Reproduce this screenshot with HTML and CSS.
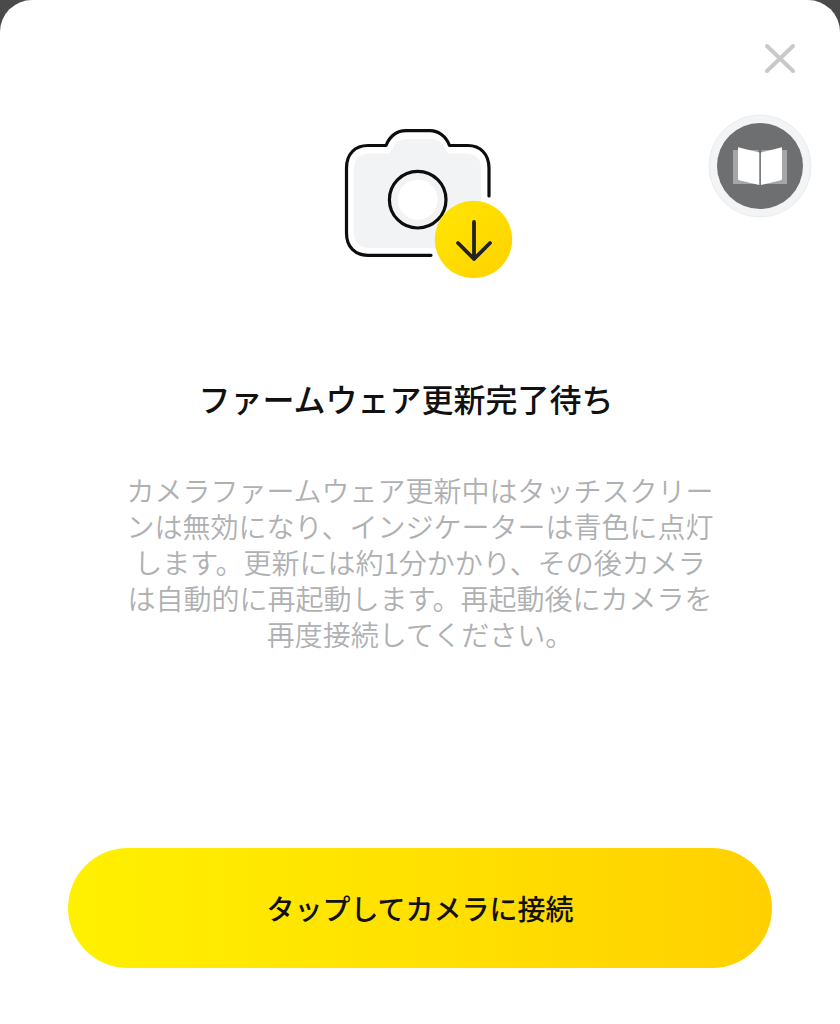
FILE: index.html
```html
<!DOCTYPE html>
<html lang="ja">
<head>
    <meta charset="UTF-8">
    <meta name="viewport" content="width=device-width, initial-scale=1.0">
    <title>ファームウェア更新</title>
    <link rel="stylesheet" href="styles.css">
</head>
<body>
    <main class="sheet">
        <header class="sheet-header">
            <button class="close-button" type="button" aria-label="閉じる">
                <svg width="32" height="32" viewBox="0 0 32 32">
                    <path d="M3 3L29 28M29 3L3 28" fill="none" stroke="#c8c9cb" stroke-width="4" stroke-linecap="round"/>
                </svg>
            </button>
        </header>

        <!-- Camera with download badge -->
        <svg class="camera" width="180" height="160" viewBox="0 0 180 160" aria-hidden="true">
            <defs>
                <linearGradient id="badge" x1="0" y1="0" x2="1" y2="1">
                    <stop offset="0" stop-color="#ffe600"/>
                    <stop offset="1" stop-color="#ffd200"/>
                </linearGradient>
            </defs>
            <path d="M30 28.500H47C51 28 52 25 54 21C57 16.500 62 14 68 14H90C96 14 101 16.500 104 21C106 25 107 28.500 111 28.500H125Q141 28.500 141 44V123H30Q14 123 14 107V44Q14 28.500 30 28.500Z" fill="#f2f3f5"/>
            <circle cx="77.700" cy="74.700" r="20" fill="#fff"/>
            <g fill="none" stroke="#0d0d0d" stroke-width="3.200" stroke-linecap="round" stroke-linejoin="round">
                <path d="M149 71V43C149 29 140 20.500 128 20.500H109.500C106 11 98 5.700 90 5.700H66C57 5.700 50 11 46 20.500H28C15 20.500 6.500 29 6.500 43V108C6.500 122 15 130.300 28 130.300H91"/>
                <circle cx="77.700" cy="74.700" r="28.300"/>
            </g>
            <circle cx="133.500" cy="114.500" r="38.800" fill="url(#badge)"/>
            <path d="M134 97V134M118 118L134 134L150 118" fill="none" stroke="#222" stroke-width="3.800" stroke-linecap="round" stroke-linejoin="round"/>
        </svg>

        <h1 class="title">ファームウェア更新完了待ち</h1>
        <p class="message">カメラファームウェア更新中はタッチスクリーンは無効になり、インジケーターは青色に点灯します。更新には約1分かかり、その後カメラは自動的に再起動します。再起動後にカメラを再度接続してください。</p>

        <button class="connect-button" type="button">タップしてカメラに接続</button>

        <!-- Floating manual button -->
        <button class="manual-button" type="button" aria-label="マニュアル">
            <svg width="104" height="104" viewBox="0 0 104 104">
                <circle cx="52" cy="52" r="51" fill="#f3f4f6" stroke="#ebecee"/>
                <circle cx="52" cy="52" r="43" fill="#6e6f71"/>
                <path d="M25 36H79V70H25Z" fill="#a5a6a8"/>
                <path d="M52 36V71" stroke="#6e6f71" stroke-width="3"/>
                <path d="M31 33.500Q30 33 30 34V65Q30 66 31 66.300L51.300 71V38.500ZM73 33.500Q74 33 74 34V65Q74 66 73 66.300L52.900 71V38.500Z" fill="#fff"/>
            </svg>
        </button>
    </main>
</body>
</html>
```

FILE: styles.css
```css
* {
    box-sizing: border-box;
}
body {
    margin: 0;
    background: #4a4a4a;
    font-family: "Noto Sans CJK JP", sans-serif;
}
button {
    padding: 0;
    border: none;
    background: none;
    font-family: inherit;
    cursor: pointer;
}
svg {
    display: block;
}
.sheet {
    position: relative;
    display: flex;
    flex-direction: column;
    align-items: center;
    min-height: 100vh;
    padding: 43px 68px 56px;
    background: #fff;
    border-radius: 32px 32px 0 0;
}
.sheet-header {
    display: flex;
    justify-content: flex-end;
    align-self: stretch;
    margin-right: -24px;
}
.close-button {
    width: 32px;
    height: 32px;
}
.camera {
    margin: 50px 0 0 20px;
}
.title {
    margin: 91px 28px 0 0;
    color: #111;
    font-size: 32px;
    font-weight: 500;
    line-height: 44px;
}
.message {
    max-width: 592px;
    margin: 52px 0 40px;
    color: #afb0b2;
    font-size: 28px;
    font-weight: 350;
    line-height: 36px;
    text-align: center;
}
.connect-button {
    width: 100%;
    height: 120px;
    margin-top: auto;
    border-radius: 60px;
    background: linear-gradient(90deg, #fff000, #ffe100 50%, #ffd000);
    color: #111;
    font-size: 28px;
    font-weight: 500;
}
.manual-button {
    position: absolute;
    top: 114px;
    right: 28px;
    border-radius: 50%;
}
```
